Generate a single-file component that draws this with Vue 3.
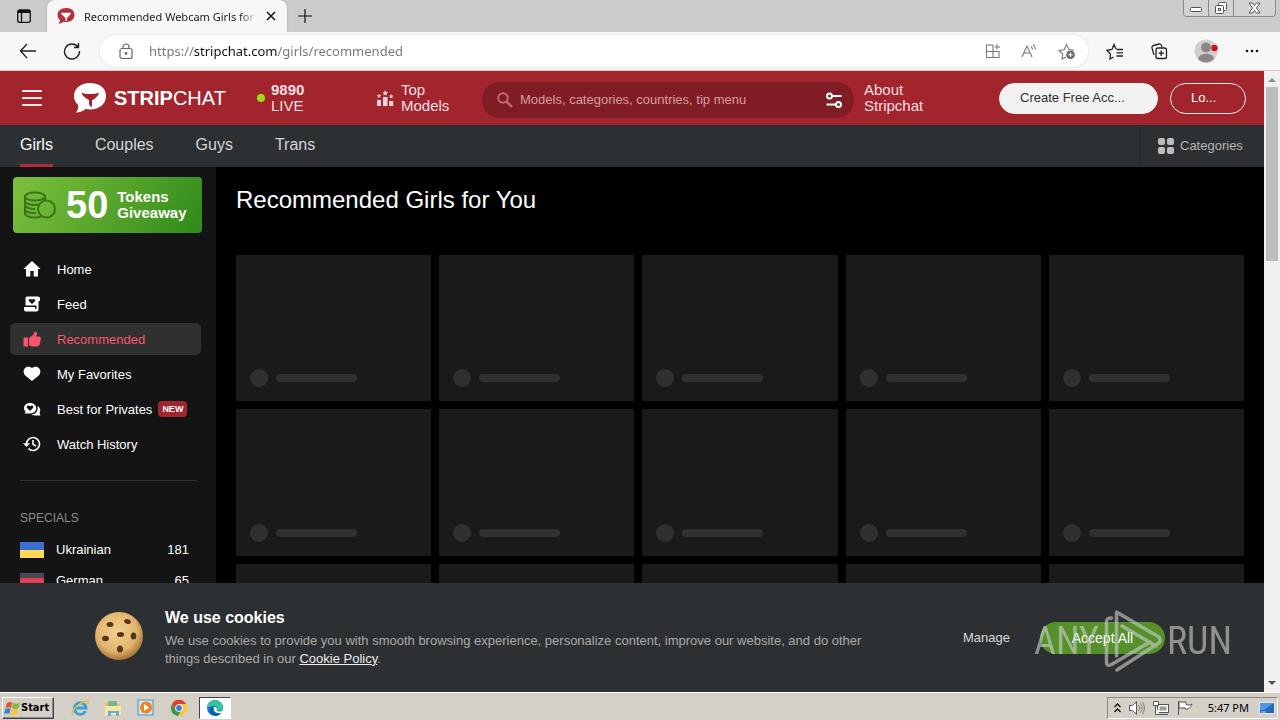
<script setup>
import { ref } from 'vue'

const url = ref('https://stripchat.com/girls/recommended')
const search = ref('')
const tabs = ['Girls', 'Couples', 'Guys', 'Trans']
const menu = [
  { id: 'home', label: 'Home' },
  { id: 'feed', label: 'Feed' },
  { id: 'like', label: 'Recommended', active: true },
  { id: 'heart', label: 'My Favorites' },
  { id: 'chat', label: 'Best for Privates', badge: 'NEW' },
  { id: 'history', label: 'Watch History' }
]
const specials = [
  { name: 'Ukrainian', count: 181, flag: 'ua' },
  { name: 'German', count: 65, flag: 'de' }
]
</script>

<template>
  <div class="screen">
    <div class="tabstrip">
      <button class="plain tab-actions" aria-label="Tab actions">
        <svg width="16" height="16" viewBox="0 0 16 16" fill="none" stroke="#111" stroke-width="1.3"><rect x="1.7" y="2" width="12.6" height="12.3" rx="2" /><path d="M2 4h12M2 3h12" stroke-width="2" /><path d="M5.5 4v10" /></svg>
      </button>
      <div class="tab">
        <svg width="18" height="18" viewBox="0 0 34 32"><path fill="#b5303b" d="M17 1C7.500 1 1 6.500 1 14c0 4 1.500 6.500 4 9 .8 2.500-.3 5-2 7.500 4 0 7-1.500 9.500-3.500 1.500.3 3 .4 4.500.4C26.500 27.400 33 22 33 14S26.500 1 17 1z" /><path fill="#fff" d="M8 10h18v2l-7 8v5h-3v-5l-8-8z" /></svg>
        <span class="tab-title">Recommended Webcam Girls for</span>
        <button class="plain" aria-label="Close tab"><svg width="10" height="10" viewBox="0 0 10 10" stroke="#111" stroke-width="1.5"><path d="M1 1l8 8M9 1L1 9" /></svg></button>
      </div>
      <button class="plain newtab" aria-label="New tab"><svg width="16" height="16" viewBox="0 0 16 16" stroke="#111" stroke-width="1.2"><path d="M8 1v14M1 8h14" /></svg></button>
      <div class="win">
        <button aria-label="Minimize"><svg width="13" height="9" viewBox="0 0 13 9" fill="#fff" stroke="#555"><rect x=".5" y="3.500" width="11" height="4" rx="1" /></svg></button>
        <button aria-label="Restore"><svg width="14" height="14" viewBox="0 0 14 14" fill="#fff" stroke="#555"><rect x="4.500" y="1.500" width="8" height="8" rx="1" /><rect x="1.500" y="4.500" width="8" height="8" rx="1" /><rect x="4.500" y="7.500" width="2" height="2" /></svg></button>
        <button class="close" aria-label="Close"><svg width="13" height="12" viewBox="0 0 13 12" fill="#fff" stroke="#555"><path d="M1 1h3.500l2 2.500 2-2.500H12L8.500 6l3.500 5H8.500l-2-2.500-2 2.500H1l3.500-5z" /></svg></button>
      </div>
    </div>

    <div class="toolbar">
      <button class="plain" aria-label="Back"><svg width="18" height="18" viewBox="0 0 18 18" fill="none" stroke="#222" stroke-width="1.3"><path d="M8 2L1.500 9 8 16M1.500 9H17" /></svg></button>
      <button class="plain reload" aria-label="Refresh"><svg width="18" height="18" viewBox="0 0 18 18" fill="none" stroke="#222" stroke-width="1.400"><path d="M15 5A7.500 7.500 0 1 0 16.500 9M15.500 1v4.500H11" /></svg></button>
      <div class="address">
        <svg width="14" height="17" viewBox="0 0 14 17" fill="none" stroke="#666" stroke-width="1.200"><rect x="1" y="5.500" width="12" height="10" rx="2" /><path d="M4 5.500V4a3 3 0 0 1 6 0v1.500" /><circle cx="7" cy="10.500" r=".8" fill="#666" /></svg>
        <input v-model="url" class="url" aria-label="Address" />
        <button class="plain" aria-label="Split screen"><svg width="16" height="16" viewBox="0 0 16 16" fill="none" stroke="#777" stroke-width="1.100"><path d="M8 2H1.500v12.500H14V8.500H1.500M8 2v12.500M12 1v5.500M9.500 4h5.500" /></svg></button>
        <button class="plain" aria-label="Read aloud"><svg width="17" height="16" viewBox="0 0 17 16" fill="none" stroke="#777" stroke-width="1.100"><path d="M1 14L6 3l5 11M3 10h6M10 3.500c1 .8 1.500 1.800 1.500 3M12 1.500c1.500 1.200 2.500 3 2.500 5" /></svg></button>
        <button class="plain" aria-label="Add favorite"><svg width="18" height="17" viewBox="0 0 18 17" fill="none" stroke="#777" stroke-width="1.100"><path d="M8 14l-4 2 .8-5L1 7.500l5-.7L8.500 1.500 11 6.500l5 .7" /><circle cx="12.500" cy="11.800" r="4.300" fill="#666" stroke="none" /><path d="M12.500 9.500v4.600M10.200 11.800h4.600" stroke="#fff" /></svg></button>
      </div>
      <button class="plain" aria-label="Favorites"><svg width="18" height="17" viewBox="0 0 18 17" fill="none" stroke="#222" stroke-width="1.300"><path d="M10 6L8 1.500 6 6.500l-5 .8L4.500 11 4 16l3.500-2M10.500 6.500H17M10.500 9.800H17M10.500 13H17" /></svg></button>
      <button class="plain" aria-label="Collections"><svg width="18" height="18" viewBox="0 0 18 18" fill="none" stroke="#222" stroke-width="1.300"><path d="M4 13L2 6a2 2 0 0 1 1.500-2.500L9 2a2 2 0 0 1 2.500 1.500L12 5" /><rect x="6" y="6" width="10.500" height="10.500" rx="2" /><path d="M11.200 8.500v5.500M8.500 11.200H14" /></svg></button>
      <button class="plain profile" aria-label="Profile"><svg width="24" height="24" viewBox="0 0 24 24"><circle cx="12" cy="12" r="11.500" fill="#d2d0ce" /><circle cx="12" cy="8.500" r="5" fill="#8a8886" /><path d="M4 20c1-7 15-7 16 0a11 11 0 0 1-16 0z" fill="#8a8886" /><circle cx="20.500" cy="9" r="3.200" fill="#e00b1c" /></svg></button>
      <button class="plain" aria-label="More"><svg width="16" height="4" viewBox="0 0 16 4" fill="#111"><circle cx="3" cy="2" r="1.300" /><circle cx="8" cy="2" r="1.300" /><circle cx="13" cy="2" r="1.300" /></svg></button>
    </div>

    <div class="viewport">
      <div class="page">
        <header class="header">
          <button class="plain burger" aria-label="Menu"><svg width="20" height="16" viewBox="0 0 20 16" fill="#fce8e9"><path d="M0 0h20v2H0zM0 7h20v2H0zM0 14h20v2H0z" /></svg></button>
          <a href="#" class="brand">
            <svg width="34" height="32" viewBox="0 0 34 32"><path fill="#fff" d="M17 1C7.500 1 1 6.500 1 14c0 4 1.500 6.500 4 9 .8 2.500-.3 5-2 7.500 4 0 7-1.500 9.500-3.500 1.500.3 3 .4 4.500.4C26.500 27.400 33 22 33 14S26.500 1 17 1z" /><path fill="#a2252e" d="M8.500 10.500C12 12.500 22 12.500 26 10.500c-.3 3-4 6.500-7 8v6.500c-1.500-.4-2.500-1.500-3-3V18c-3.500-1.500-7-4.500-7.500-7.500z" /></svg>
            <span class="wordmark"><b>STRIP</b>CHAT</span>
          </a>
          <a href="#" class="live"><i class="dot"></i><span><b>9890</b><br />LIVE</span></a>
          <a href="#" class="top">
            <svg width="18" height="18" viewBox="0 0 18 18" fill="#f5d5d7"><path d="M1 11h4v6H1zM7 8h4.500v9H7zM13.200 12h4v5h-4zM9.200 1l.9 1.900 2 .2-1.500 1.400.4 2-1.800-1-1.800 1 .4-2L6.300 3.100l2-.2zM3 4.500l.7 1.500 1.600.2-1.200 1.100.3 1.600L3 8.100l-1.400.8.3-1.600L.7 6.200 2.300 6zM15.200 5l.7 1.500 1.600.2-1.200 1.100.3 1.600-1.400-.8-1.400.8.3-1.600-1.200-1.100 1.600-.2z" /></svg>
            <span>Top<br />Models</span>
          </a>
          <label class="search">
            <svg width="18" height="18" viewBox="0 0 18 18" fill="none" stroke="#c9696f"><circle cx="7" cy="7" r="4.800" stroke-width="2" /><path d="M10.500 10.500l5.500 5.500" stroke-width="2.300" /></svg>
            <input v-model="search" aria-label="Search" placeholder="Models, categories, countries, tip menu" />
            <button class="plain" aria-label="Filters"><svg width="18" height="16" viewBox="0 0 18 16" fill="none" stroke="#fff" stroke-width="2"><circle cx="4.500" cy="4" r="2.500" /><path d="M7 4h9.500M1.500 12.500H11" /><circle cx="13.500" cy="12.500" r="2.500" /></svg></button>
          </label>
          <a href="#" class="about">About<br />Stripchat</a>
          <button class="pill create">Create Free Acc...</button>
          <button class="pill login">Lo...</button>
        </header>

        <nav class="nav">
          <a v-for="(t, i) in tabs" :key="t" href="#" :class="{ on: i === 0 }">{{ t }}</a>
          <a href="#" class="categories">
            <svg width="18" height="18" viewBox="0 0 18 18" fill="#bdbdbd"><rect x="1" y="1" width="7" height="7" rx="2" /><rect x="10" y="1" width="7" height="7" rx="2" /><rect x="1" y="10" width="7" height="7" rx="2" /><rect x="10" y="10" width="7" height="7" rx="2" /></svg>
            Categories
          </a>
        </nav>

        <div class="body">
          <aside class="side">
            <a href="#" class="giveaway">
              <svg width="34" height="28" viewBox="0 0 34 28" fill="none" stroke="#3d7419" stroke-width="2"><ellipse cx="12" cy="5.500" rx="10" ry="4" /><path d="M2 5.500v17c0 2.400 4.500 4 10 4 2.500 0 4.500-.3 6.500-1M22 5.500v4M2 10c0 2.400 4.500 4 10 4l4-.5M2 14c0 2.400 4.500 4 10 4M2 18.300c0 2.400 4.500 4 11 4" /><circle cx="23.500" cy="18" r="8.500" /></svg>
              <strong>50</strong><span>Tokens<br />Giveaway</span>
            </a>
            <nav class="menu" aria-label="Sections">
              <a v-for="m in menu" :key="m.id" href="#" :class="{ active: m.active }">
                <svg width="18" height="18" viewBox="0 0 18 18" fill="currentColor">
                  <path v-if="m.id === 'home'" d="M9 1l8.500 8H15v7.500h-4.300V11H7.300v5.500H3V9H.5z" />
                  <path v-else-if="m.id === 'feed'" fill-rule="evenodd" d="M4 1.500h11a2 2 0 0 1 2 2V6h-1.500v8.500a2 2 0 0 1-2 2H3a2 2 0 0 1-2-2V12h11v2h1.500v-3.500H2.500V3a1.500 1.500 0 0 1 1.500-1.500zM9 9l3-2.800c1.200-1.700-1.300-3.200-3-1.600-1.700-1.600-4.200-.1-3 1.600z" />
                  <path v-else-if="m.id === 'like'" d="M.5 7.500H5v9H.5zM6 8l3.500-2.500 2.500-4c2.200 0 2.500 1.800 1.800 3L13 6.500h2.500c2 0 2.500 1.300 2.300 2.700L17 13.500c-.4 2-1.500 3-3.200 3H9l-3-1z" />
                  <path v-else-if="m.id === 'heart'" d="M9 16L2.500 10.800C-2.500 5.500 3.500-.8 9 3c5.500-3.800 11.500 2.500 6.500 7.800z" />
                  <path v-else-if="m.id === 'chat'" fill-rule="evenodd" d="M7 3c3.800 0 6.300 2.500 6.300 5.300S10.800 13.500 7 13.500H1.500L2.700 12C-1 7.500 2 3 7 3zm0 8l3-3c1.200-1.800-1.300-3.500-3-1.700C5.300 4.500 2.800 6.200 4 8zM14.500 6c2.800 1.500 3.500 4.500 2 6.800l1 2.700h-4c-2 0-4-.4-5.300-1 4.500-.3 7.300-3.500 6.300-8.500z" />
                  <g v-else fill="none" stroke="currentColor" stroke-width="1.600"><path d="M3.500 9A6.500 6.500 0 1 1 5.400 13.600M10 5v4.300l3 1.800" /><path d="M0 8.300h7L3.500 12z" fill="currentColor" stroke="none" /></g>
                </svg>
                <span>{{ m.label }}</span><em v-if="m.badge">{{ m.badge }}</em>
              </a>
            </nav>
            <hr />
            <h2>SPECIALS</h2>
            <a v-for="s in specials" :key="s.name" href="#" class="special">
              <i :class="['flag', s.flag]"></i><span>{{ s.name }}</span><span class="count">{{ s.count }}</span>
            </a>
          </aside>
          <main class="main">
            <h1>Recommended Girls for You</h1>
            <div class="grid">
              <div v-for="n in 15" :key="n" class="card"><i class="avatar"></i><i class="line"></i></div>
            </div>
          </main>
        </div>

        <section class="cookies" aria-label="Cookie notice">
          <svg class="cookie" width="50" height="50" viewBox="0 0 50 50">
            <defs><radialGradient id="dough" cx=".45" cy=".4" r=".6"><stop offset="0" stop-color="#f3d091" /><stop offset=".7" stop-color="#e2b56f" /><stop offset="1" stop-color="#a8743b" /></radialGradient></defs>
            <circle cx="25" cy="25" r="24" fill="url(#dough)" />
            <g fill="#523817"><ellipse cx="16" cy="13.500" rx="3.400" ry="2.500" /><ellipse cx="33.500" cy="10.500" rx="3.400" ry="2.400" transform="rotate(15 33.500 10.500)" /><ellipse cx="11.500" cy="27.500" rx="3.400" ry="2.800" /><ellipse cx="26.500" cy="23.500" rx="3.600" ry="2.500" /><ellipse cx="39.500" cy="25" rx="2.800" ry="3.500" /><ellipse cx="26" cy="38" rx="3" ry="3.500" /></g>
          </svg>
          <div class="copy">
            <h3>We use cookies</h3>
            <p>We use cookies to provide you with smooth browsing experience, personalize content, improve our website, and do other things described in our <a href="#">Cookie Policy</a>.</p>
          </div>
          <button class="manage">Manage</button>
          <button class="accept">Accept All</button>
          <div class="watermark">
            <span>ANY</span>
            <svg width="60" height="64" viewBox="0 0 60 64" fill="none" stroke="#d0d0d0" stroke-width="3.500" stroke-linejoin="round" stroke-linecap="round"><path d="M13.500 47V3L55 27.500a4 4 0 0 1 0 7L14 61M19 17l34 20M8.500 9c-4 0-5 1-5 4v41c0 2 2 3 5 1.500L47 33" /></svg>
            <span>RUN</span>
          </div>
        </section>
      </div>
      <div class="scroll" aria-hidden="true">
        <svg width="16" height="16" viewBox="0 0 16 16"><path d="M4 11l4-4 4 4z" fill="#8b8b8b" /></svg>
        <div class="thumb"></div>
        <svg class="down" width="16" height="16" viewBox="0 0 16 16"><path d="M4 5h8l-4 4z" fill="#505050" /></svg>
      </div>
    </div>

    <footer class="taskbar">
      <button class="start">
        <svg width="17" height="16" viewBox="0 0 17 16"><path d="M3 3c2-1.500 4-1.300 5.500-.3L7 8C5.500 7 3.500 7 1.500 8z" fill="#e5532a" /><path d="M9.500 3c2 1 4 1 6.500-.5L14.500 8c-2 1.300-4.500 1.200-6.500.3z" fill="#7eb93b" /><path d="M1.200 9c2-1 4-1 5.500 0L5.300 14C4 13 2 13 0 14z" fill="#3a86c8" /><path d="M7.700 9.300c2 1 4.500 1 6.500-.3L12.800 14c-2 1.500-4.500 1.500-6.500.5z" fill="#f8c22d" /></svg>
        Start
      </button>
      <button class="plain task" aria-label="Internet Explorer"><svg width="18" height="18" viewBox="0 0 18 18" fill="none"><path d="M14.500 12a5.800 5.800 0 1 1 .5-3H5" stroke="#39a0dd" stroke-width="2.800" /><path d="M2 16c-3-3 6-13 14-14 1 0 1.500 1 .5 3" stroke="#e9bd35" stroke-width="1.400" /></svg></button>
      <button class="plain task" aria-label="Explorer"><svg width="18" height="18" viewBox="0 0 18 18"><path d="M1 3h6l1 2h8v10H1z" fill="#eac65f" /><path d="M4 2h9v5H4z" fill="#75b98b" /><path d="M1 7h16v9H1z" fill="#f7e6a0" /><path d="M4 17v-5h11v5h-3v-3H7v3z" fill="#66addb" /></svg></button>
      <button class="plain task" aria-label="Media Player"><svg width="18" height="18" viewBox="0 0 18 18"><rect x="1" y="1" width="15" height="15" fill="#c8e4f5" stroke="#4b93c5" /><circle cx="9" cy="8.500" r="6" fill="#f18420" /><path d="M7 5l5 3.500L7 12z" fill="#fff" /></svg></button>
      <button class="plain task" aria-label="Chrome"><svg width="18" height="18" viewBox="0 0 18 18"><circle cx="9" cy="9" r="8" fill="#f8ca3a" /><path d="M2 5a8 8 0 0 1 14 0H9L5.500 11z" fill="#df4036" /><path d="M2 5a8 8 0 0 0 6 12l3.500-6H5.500z" fill="#369b4b" /><circle cx="9" cy="9" r="3.800" fill="#fff" /><circle cx="9" cy="9" r="2.900" fill="#3e7de0" /></svg></button>
      <button class="task current" aria-label="Edge"><svg width="18" height="18" viewBox="0 0 18 18"><circle cx="9" cy="9" r="8" fill="#147cc9" /><path d="M1 8c1-9 15-9 16 0 0 4-5 4.500-6.500 3 2-3-1-5-4-4-2.500 0-4.500 1-5.500 3z" fill="#35c3a2" /><path d="M7 8c-2 5 2 8 8 6-3 4-9 3-11-1-1-3 1-5 3-5z" fill="#0c56a0" /><path d="M8 8c2-.5 3.500 1 2.500 3 1.500 2 4 2 6.500 0l-1.500 3C10 15 7 12 8 8z" fill="#fff" /></svg></button>
      <div class="tray">
        <svg width="9" height="12" viewBox="0 0 9 12" fill="none" stroke="#111" stroke-width="1.400"><path d="M1.500 5l3-3 3 3M1.500 10l3-3 3 3" /></svg>
        <svg width="18" height="16" viewBox="0 0 18 16" fill="#fff" stroke="#555"><path d="M1.500 5.500h3l4-4v13l-4-4h-3z" /><path d="M10.500 5c1.200 2 1.200 4 0 6M12.500 3.500c2 3 2 6 0 9M14.500 2c2.500 4 2.500 8 0 12" fill="none" stroke="#777" /></svg>
        <svg width="18" height="16" viewBox="0 0 18 16" fill="#fff" stroke="#555"><rect x="5.500" y="4.500" width="11" height="8" /><rect x="7.500" y="6.500" width="7" height="4" fill="#999" stroke="none" /><path d="M7 14.500h9M1.500 1.500h5v4h-5zM3.500 5.500v9h4" /></svg>
        <svg width="18" height="16" viewBox="0 0 18 16" fill="#fff" stroke="#555"><path d="M2.500 1v14M3 2h7v2.500c2 .8 4 .5 6-.5-1 2-2 4-4 5H9V8H3z" /></svg>
        <time>5:47 PM</time>
        <svg width="16" height="14" viewBox="0 0 16 14"><rect x=".5" y="1.500" width="15" height="11" fill="#2467bd" stroke="#dce9f7" /><path d="M1 2h14L5 9H1z" fill="#4d98e2" /><path d="M2 11h5" stroke="#bde" /></svg>
      </div>
    </footer>
  </div>
</template>

<style>
body { margin: 0; background: #000; }
</style>

<style scoped>
* { box-sizing: border-box; }
.screen { display: flex; flex-direction: column; height: 100vh; min-height: 480px; overflow: hidden; font-family: "Liberation Sans", Arial, sans-serif; font-size: 13px; color: #fff; }
button, input { font: inherit; color: inherit; }
button { cursor: pointer; }
a { color: inherit; text-decoration: none; }
svg { display: block; flex: none; }
h1, h2, h3, p { margin: 0; font-weight: normal; }
.plain { display: grid; place-items: center; padding: 0; border: 0; background: none; }

.tabstrip { display: flex; flex: none; height: 32px; background: #cbcbcb; color: #222; font: 12px "Noto Sans", "Open Sans", sans-serif; }
.tab-actions { width: 47px; }
.tab { display: flex; align-items: center; gap: 9px; width: 240px; padding: 0 11px 0 10px; border-radius: 8px 8px 0 0; background: #f7f7f7; box-shadow: 0 0 2px #999; }
.tab-title { flex: 1; white-space: nowrap; font-size: 11px; mask-image: linear-gradient(90deg, #000 90%, transparent); }
.newtab { width: 35px; }
.win { display: flex; height: 17px; margin-left: auto; margin-right: 4px; border: 1px solid #888; border-top: 0; border-radius: 0 0 4px 4px; overflow: hidden; }
.win button { display: grid; place-items: center; width: 25px; padding: 0; border: 0; border-right: 1px solid #888; background: #d3d3d3; }
.win .close { width: 41px; border: 0; }

.toolbar { display: flex; flex: none; align-items: center; gap: 26px; height: 39px; padding: 0 20px 0 19px; background: #f7f7f7; border-bottom: 1px solid #e5c5c6; }
.address { display: flex; flex: 1; align-items: center; gap: 20px; height: 32px; padding: 0 12px 0 19px; margin-right: -8px; margin-left: -7px; border-radius: 16px; background: #fff; box-shadow: 0 0 3px #ddd; }
.url { flex: 1; min-width: 0; padding: 0; margin-left: -4px; border: 0; outline: 0; font: 13px "Noto Sans", "Open Sans", sans-serif; color: transparent; background: linear-gradient(90deg, #757575 45px, #111 45px 129px, #757575 129px); background-clip: text; -webkit-background-clip: text; }

.viewport { display: flex; flex: 1; min-height: 0; }
.page { position: relative; display: flex; flex: 1; flex-direction: column; min-width: 0; overflow: hidden; background: #000; }
.header { display: flex; flex: none; align-items: center; height: 54px; padding: 0 18px 0 22px; background: #a2252e; color: #f6dfe0; font-size: 15px; line-height: 16px; }
.burger { width: 20px; margin-right: 31px; }
.brand { display: flex; align-items: center; gap: 7px; width: 184px; color: #fff; }
.wordmark { font-size: 20px; line-height: 24px; }
.live { display: flex; align-items: center; gap: 6px; width: 119px; }
.dot { width: 8px; height: 8px; border-radius: 50%; background: #9bdc12; }
.top { display: flex; align-items: center; gap: 7px; width: 106px; }
.search { display: flex; flex: 1; align-items: center; gap: 6px; min-width: 0; height: 36px; margin-top: 4px; padding: 0 11px 0 14px; border-radius: 18px; background: #801c23; }
.search input { flex: 1; min-width: 0; padding: 0; border: 0; outline: 0; background: none; font-size: 13px; }
.search input::placeholder { color: #d79da1; opacity: 1; }
.about { width: 135px; margin-left: 10px; }
.pill { height: 31px; padding: 0 20px; border: 1px solid #f2f2f2; border-radius: 16px; font-size: 13px; text-align: left; white-space: nowrap; }
.create { width: 159px; margin-right: 12px; background: #f2f2f2; color: #303030; }
.login { width: 76px; background: none; color: #fff; }

.nav { display: flex; flex: none; gap: 42px; height: 42px; padding-left: 20px; background: #2d3032; color: #d5d5d5; font-size: 16px; line-height: 40px; }
.nav a.on { color: #fff; border-bottom: 3px solid #b42c3b; }
.nav .categories { display: flex; align-items: center; gap: 5px; width: 125px; margin-left: auto; padding-left: 17px; border-left: 1px solid #222426; color: #b5b5b5; font-size: 13px; }

.body { display: flex; flex: 1; min-height: 0; overflow: hidden; }
.side { flex: none; width: 216px; padding: 10px 15px 0 10px; background: #141414; }
.giveaway { display: flex; align-items: center; gap: 9px; height: 56px; margin: 0 -1px 20px 3px; padding-left: 10px; border-radius: 4px; background: linear-gradient(120deg, #7cc13b, #54a32a 55%, #2f8a1a); font-weight: bold; font-size: 15px; line-height: 16px; }
.giveaway strong { font-size: 38px; line-height: 40px; }
.menu { display: flex; flex-direction: column; gap: 3px; }
.menu a { display: flex; align-items: center; height: 32px; padding-left: 13px; border-radius: 5px; }
.menu span { margin-left: 16px; }
.menu .active { background: #303030; color: #f7566b; }
.menu em { margin-left: 6px; padding: 0 4px; border-radius: 4px; background: #a2252e; font-style: normal; font-weight: bold; font-size: 9px; line-height: 16px; }
hr { height: 1px; margin: 20px 4px 30px 10px; border: 0; background: #303030; }
.side h2 { margin: 0 10px 8px; color: #8c8c8c; font-size: 12px; line-height: 15px; }
.special { display: flex; align-items: center; gap: 12px; height: 31px; padding: 0 12px 0 10px; }
.count { margin-left: auto; }
.flag { width: 24px; height: 16px; }
.ua { background: linear-gradient(#3b70d0 50%, #fcd955 50%); }
.de { background: linear-gradient(#464655 33%, #dc4255 33% 66%, #ffe15a 66%); }

.main { flex: 1; min-width: 0; padding: 16px 20px; }
h1 { height: 72px; font-size: 24px; line-height: 34px; }
.grid { display: grid; grid-template-columns: repeat(5, minmax(0, 1fr)); gap: 8px; }
.card { display: flex; align-items: flex-end; gap: 8px; aspect-ratio: 4 / 3; padding: 14px; background: #1a1a1a; }
.avatar { width: 18px; height: 18px; border-radius: 50%; background: #303030; }
.line { width: 81px; height: 8px; margin-bottom: 5px; border-radius: 4px; background: #303030; }

.cookies { position: absolute; right: 0; bottom: 0; left: 0; display: flex; align-items: center; height: 109px; padding: 0 99px 0 94px; background: #2d3032; }
.cookie { margin-right: 21px; margin-bottom: 4px; }
.copy { flex: 1; max-width: 720px; color: #aaa; line-height: 18px; }
.copy h3 { margin-bottom: 4px; color: #fff; font-weight: bold; font-size: 16px; line-height: 20px; }
.copy a { color: #eee; text-decoration: underline; }
.manage { margin-left: auto; margin-right: 30px; padding: 0; border: 0; background: none; color: #d8d8d8; }
.accept { width: 125px; height: 32px; border: 0; border-radius: 16px; background: #55902a; color: #fff; font-size: 14px; }
.watermark { position: absolute; right: 32px; top: 26px; display: flex; align-items: center; gap: 4px; opacity: .6; color: #d0d0d0; font-family: "Liberation Sans Narrow", "Roboto Condensed", "Liberation Sans", sans-serif; font-size: 38px; line-height: 44px; pointer-events: none; }

.scroll { display: flex; flex: none; flex-direction: column; align-items: center; width: 16px; background: #f0f0f0; }
.thumb { width: 12px; height: 28%; background: #bcbcbc; }
.down { margin-top: auto; }

.taskbar { display: flex; flex: none; align-items: center; gap: 7px; height: 28px; padding: 2px 2px 0; border-top: 1px solid #fff; background: #d4d0c8; color: #000; }
.start { display: flex; align-items: center; width: 52px; height: 22px; margin-right: 6px; padding: 0 3px 0 1px; border: 1px solid; border-color: #fff #444 #444 #fff; background: #d4d0c8; font: bold 11px "DejaVu Sans Condensed", "Noto Sans", sans-serif; box-shadow: inset -1px -1px #888; }
.task { width: 26px; height: 22px; }
.current { display: grid; place-items: center; width: 32px; padding: 0; border: 1px solid; border-color: #444 #fff #fff #444; background: #fff; }
.tray { display: flex; align-items: center; gap: 6px; height: 22px; margin-left: auto; padding: 0 2px 0 5px; border: 1px solid; border-color: #888 #fff #fff #888; }
time { margin: 0 4px 0 8px; font: 11px "Noto Sans", sans-serif; }
</style>
